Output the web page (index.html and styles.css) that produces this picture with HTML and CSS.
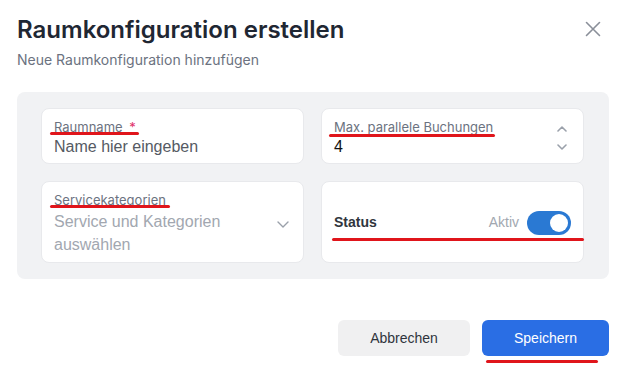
FILE: index.html
```html
<!DOCTYPE html>
<html lang="de">
<head>
<meta charset="utf-8">
<title>Raumkonfiguration erstellen</title>
<link rel="stylesheet" href="styles.css">
</head>
<body>
<div class="dialog">
  <header class="head">
    <div class="titles">
      <h1 class="title">Raumkonfiguration erstellen</h1>
      <p class="subtitle">Neue Raumkonfiguration hinzufügen</p>
    </div>
    <button class="close" aria-label="Schließen">
      <svg width="16" height="16" viewBox="0 0 16 16"><path d="M1.5 1.5 L14.5 14.5 M14.5 1.5 L1.5 14.5" stroke="#8a8f99" stroke-width="1.6" stroke-linecap="round" fill="none"/></svg>
    </button>
  </header>

  <section class="panel">
    <div class="card field">
      <label class="label">Raumname <span class="req">*</span></label>
      <div class="value placeholder-dark">Name hier eingeben</div>
      <span class="mark mark-1"></span>
    </div>
    <div class="card field with-icon">
      <div class="field-main">
        <label class="label">Max. parallele Buchungen</label>
        <div class="value">4</div>
      </div>
      <div class="stepper">
        <svg width="10" height="6" viewBox="0 0 10 6"><path d="M1 5 L5 1 L9 5" stroke="#9aa0aa" stroke-width="1.6" fill="none" stroke-linecap="round" stroke-linejoin="round"/></svg>
        <svg width="10" height="6" viewBox="0 0 10 6"><path d="M1 1 L5 5 L9 1" stroke="#9aa0aa" stroke-width="1.6" fill="none" stroke-linecap="round" stroke-linejoin="round"/></svg>
      </div>
      <span class="mark mark-3"></span>
    </div>
    <div class="card field with-icon">
      <div class="field-main">
        <label class="label">Servicekategorien</label>
        <div class="value placeholder tall">Service und Kategorien auswählen</div>
      </div>
      <div class="chev">
        <svg width="12" height="7" viewBox="0 0 12 7"><path d="M1 1 L6 6 L11 1" stroke="#9aa0aa" stroke-width="1.4" fill="none" stroke-linecap="round" stroke-linejoin="round"/></svg>
      </div>
      <span class="mark mark-2"></span>
    </div>
    <div class="card status">
      <span class="status-label">Status</span>
      <div class="status-right">
        <span class="status-text">Aktiv</span>
        <span class="toggle"><span class="knob"></span></span>
      </div>
      <span class="mark mark-4"></span>
    </div>
  </section>

  <footer class="actions">
    <button class="btn btn-secondary">Abbrechen</button>
    <button class="btn btn-primary">Speichern<span class="mark mark-5"></span></button>
  </footer>
</div>
</body>
</html>
```

FILE: styles.css
```css
* { box-sizing: border-box; }
html, body { margin: 0; padding: 0; background: #ffffff; }
body { font-family: Inter, "Liberation Sans", sans-serif; color: #1f2530; }

.dialog {
  width: 621px;
  height: 376px;
  padding: 15px 12px 0 17px;
}

.head {
  display: flex;
  justify-content: space-between;
  align-items: flex-start;
}
.title {
  margin: 0;
  font-size: 24px;
  line-height: 30px;
  font-weight: 600;
  color: #1f2733;
}
.subtitle {
  margin: 6px 0 0;
  font-size: 14px;
  line-height: 17px;
  color: #6b7280;
}
.close {
  border: 0;
  background: none;
  padding: 0;
  margin: 6px 8px 0 0;
  width: 16px;
  height: 16px;
  display: flex;
}

.panel {
  margin-top: 24px;
  background: #f1f2f4;
  border-radius: 8px;
  padding: 16px 25px 16px 24px;
  display: grid;
  grid-template-columns: 1fr 1fr;
  column-gap: 17px;
  row-gap: 17px;
}

.card {
  position: relative;
  background: #ffffff;
  border: 1px solid #e8e9ec;
  border-radius: 8px;
}
.field { padding: 10px 12px 6px 12px; }
.with-icon { display: flex; align-items: center; gap: 8px; }
.field-main { flex: 1; min-width: 0; }

.label {
  display: block;
  font-size: 13px;
  line-height: 16px;
  color: #6b7280;
}
.req { color: #e0306a; margin-left: 3px; }
.value {
  margin-top: 2px;
  font-family: "Liberation Sans", Arial, sans-serif;
  font-size: 16px;
  line-height: 20px;
  color: #111111;
}
.placeholder-dark { color: #555a63; }
.placeholder { color: #a2a7b0; }
.tall { line-height: 23px; }

.stepper {
  display: flex;
  flex-direction: column;
  gap: 12px;
  margin-right: 4px;
}
.chev { margin-right: 2px; display: flex; }

.status {
  display: flex;
  align-items: center;
  justify-content: space-between;
  padding: 0 12px;
}
.status-label {
  font-family: "Liberation Sans", Arial, sans-serif;
  font-weight: 700;
  font-size: 14px;
  color: #30353d;
}
.status-right { display: flex; align-items: center; gap: 8px; }
.status-text {
  font-family: "Liberation Sans", Arial, sans-serif;
  font-size: 14px;
  color: #a2a7b0;
}
.toggle {
  width: 44px;
  height: 24px;
  border-radius: 12px;
  background: #2a79d3;
  display: flex;
  align-items: center;
  justify-content: flex-end;
  padding: 0 3px;
  margin-top: 2px;
}
.knob {
  width: 18px;
  height: 18px;
  border-radius: 50%;
  background: #ffffff;
}

.actions {
  margin-top: 41px;
  display: flex;
  justify-content: flex-end;
  gap: 12px;
}
.btn {
  position: relative;
  height: 36px;
  border: 0;
  border-radius: 6px;
  font-family: "Liberation Sans", Arial, sans-serif;
  font-size: 14px;
}
.btn-secondary { width: 132px; background: #f0f0f1; color: #2f343c; }
.btn-primary { width: 127px; background: #2a6ee4; color: #ffffff; }

/* red annotation strokes drawn over the content */
.mark {
  position: absolute;
  height: 3px;
  background: #e0151b;
  border-radius: 2px;
}
.mark-1 { left: 8px; top: 23px; width: 89px; }
.mark-2 { left: 8px; top: 23px; width: 120px; }
.mark-3 { left: 7px; top: 25px; width: 166px; }
.mark-4 { left: 10px; top: 56px; width: 252px; }
.mark-5 { left: 4px; top: 40px; width: 112px; }
```
